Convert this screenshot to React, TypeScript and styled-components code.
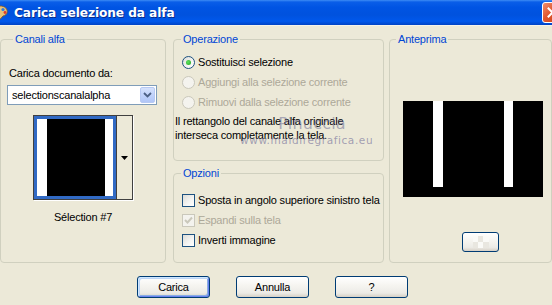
import React from 'react';
import styled, { createGlobalStyle } from 'styled-components';

const Global = createGlobalStyle`
  html, body { margin: 0; padding: 0; background: #ECE9D8; }
  body { font-family: "Liberation Sans", Arial, sans-serif; font-size: 11px; }
`;

const Window = styled.div`
  position: relative;
  width: 552px;
  height: 305px;
  overflow: hidden;
  background: #ECE9D8;
  display: flex;
  flex-direction: column;
  font-family: "Liberation Sans", Arial, sans-serif;
  font-size: 11px;
  letter-spacing: -0.2px;
  color: #000;
`;

const TitleBar = styled.div`
  flex: none;
  height: 25px;
  display: flex;
  align-items: center;
  background: linear-gradient(to bottom, #3D8CF5 0%, #0A5EE8 8%, #0054E3 30%, #0052DE 60%, #0058EC 85%, #0043C4 100%);
  border-bottom: 1px solid #F5F3EA;
`;

const TitleIcon = styled.svg`
  flex: none;
  width: 16px;
  height: 16px;
  margin-left: -8px;
`;

const TitleText = styled.div`
  margin-left: 6px;
  color: #fff;
  font-family: "DejaVu Sans", Verdana, sans-serif;
  font-weight: bold;
  font-size: 12.2px;
  letter-spacing: -0.1px;
  text-shadow: 1px 1px 0 #0A2C8C;
`;

const CloseButton = styled.div`
  flex: none;
  margin-left: auto;
  margin-right: -11px;
  width: 21px;
  height: 21px;
  box-sizing: border-box;
  border: 1px solid #fff;
  border-radius: 3px;
  background: linear-gradient(to bottom right, #F08E6E 0%, #E0562E 45%, #C8401A 100%);
  display: flex;
  align-items: center;
  padding-left: 4px;
`;

const Body = styled.div`
  flex: none;
  display: flex;
  padding-top: 7px;
  height: 230px;
`;

const Group = styled.fieldset<{ $w?: number }>`
  margin: 0;
  padding: 0;
  min-width: 0;
  box-sizing: border-box;
  border: 1px solid #D0D0BF;
  border-radius: 4px;
  display: flex;
  flex-direction: column;
  ${p => (p.$w ? `width: ${p.$w}px; flex: none;` : 'flex: 1;')}
`;

const Legend = styled.legend<{ $off: number }>`
  margin-left: ${p => p.$off}px;
  padding: 0 2px;
  color: #0046D5;
  font-size: 11px;
  line-height: 13px;
`;

const LeftGroup = styled(Group)`
  margin-right: 7px;
  padding-left: 6px;
`;

const FieldLabel = styled.div`
  margin-top: 21px;
  margin-left: 2px;
  line-height: 13px;
`;

const Select = styled.div`
  margin-top: 5px;
  width: 150px;
  height: 20px;
  box-sizing: border-box;
  border: 1px solid #7F9DB9;
  background: #fff;
  display: flex;
  align-items: center;
  padding-left: 4px;
`;

const SelectText = styled.span`
  flex: 1;
`;

const SelectArrow = styled.div`
  flex: none;
  width: 15px;
  height: 16px;
  margin-right: 1px;
  box-sizing: border-box;
  border: 1px solid #B7C9F3;
  border-radius: 2px;
  background: linear-gradient(to bottom, #D6E2FC 0%, #C1D3FB 50%, #B1C6F7 100%);
  display: flex;
  align-items: center;
  justify-content: center;
`;

const Thumb = styled.div`
  margin-top: 10px;
  align-self: center;
  margin-left: -6px;
  width: 100px;
  height: 85px;
  box-sizing: border-box;
  border: 1px solid #404040;
  box-shadow: 1px 1px 0 #fff;
  display: flex;
`;

const ThumbImage = styled.div`
  flex: none;
  width: 82px;
  box-sizing: border-box;
  border: 3px solid #316AC5;
  display: flex;
`;

const ThumbDrop = styled.div`
  flex: 1;
  border-left: 1px solid #404040;
  background: #ECE9D8;
  display: flex;
  align-items: center;
  justify-content: center;
`;

const Caption = styled.div`
  margin-top: 11px;
  margin-left: -6px;
  text-align: center;
  line-height: 13px;
`;

const MiddleCol = styled.div`
  flex: none;
  width: 211px;
  margin-right: 5px;
  display: flex;
  flex-direction: column;
  gap: 6px;
`;

const OpGroup = styled(Group)`
  height: 128px;
  flex: none;
`;

const OptGroup = styled(Group)`
  flex: 1;
`;

const OptionRow = styled.div<{ $first?: number }>`
  height: 20px;
  display: flex;
  align-items: center;
  gap: 3px;
  padding-left: 8px;
  margin-top: ${p => p.$first ?? 0}px;
`;

const OptionText = styled.span<{ $disabled?: boolean }>`
  color: ${p => (p.$disabled ? '#ACA899' : '#000')};
  white-space: nowrap;
`;

const Radio = styled.span<{ $disabled?: boolean; $checked?: boolean }>`
  flex: none;
  width: 13px;
  height: 13px;
  box-sizing: border-box;
  border-radius: 50%;
  border: 1px solid ${p => (p.$disabled ? '#CAC8BB' : '#1C5180')};
  background: ${p =>
    p.$disabled ? '#F4F3EE' : 'linear-gradient(135deg, #DCDCD7 0%, #F5F5F3 60%, #FFFFFF 100%)'};
  display: flex;
  align-items: center;
  justify-content: center;
  &::after {
    content: '';
    display: ${p => (p.$checked ? 'block' : 'none')};
    width: 5px;
    height: 5px;
    border-radius: 50%;
    background: radial-gradient(circle at 40% 40%, #5CE25C 0%, #21A121 100%);
  }
`;

const Check = styled.span<{ $disabled?: boolean }>`
  flex: none;
  width: 13px;
  height: 13px;
  box-sizing: border-box;
  border: 1px solid ${p => (p.$disabled ? '#CAC8BB' : '#1C5180')};
  background: ${p =>
    p.$disabled ? '#F4F3EE' : 'linear-gradient(135deg, #DCDCD7 0%, #F5F5F3 60%, #FFFFFF 100%)'};
  display: flex;
  align-items: center;
  justify-content: center;
`;

const InfoText = styled.div`
  margin-top: 2px;
  padding-left: 1px;
  line-height: 14px;
`;

const RightGroup = styled(Group)`
  flex: none;
  width: 163px;
`;

const Preview = styled.svg`
  flex: none;
  margin-top: 55px;
  margin-left: 13px;
  width: 140px;
  height: 96px;
`;

const SmallButton = styled.div`
  margin-top: 35px;
  margin-left: 72px;
  width: 37px;
  height: 20px;
  box-sizing: border-box;
  border: 1px solid #003C74;
  border-radius: 3px;
  background: linear-gradient(to bottom, #FFFFFF 0%, #F4F3EE 50%, #ECEBE6 80%, #D6D0C5 100%);
  display: flex;
  align-items: center;
  justify-content: center;
`;

const ButtonRow = styled.div`
  flex: none;
  display: flex;
  gap: 26px;
  padding-left: 137px;
  margin-top: 13px;
`;

const Button = styled.button<{ $default?: boolean }>`
  width: 73px;
  height: 22px;
  box-sizing: border-box;
  padding: 0;
  border: 1px solid #003C74;
  border-radius: 3px;
  background: linear-gradient(to bottom, #FFFFFF 0%, #F6F5F1 40%, #ECEBE6 80%, #D6D0C5 100%);
  font-family: "Liberation Sans", Arial, sans-serif;
  font-size: 11px;
  letter-spacing: -0.2px;
  color: #000;
  box-shadow: ${p =>
    p.$default
      ? 'inset 1px 1px 0 #CEE7FF, inset -1px -1px 0 #6982EE, inset 2px 2px 0 #BCD4F6, inset -2px -2px 0 #89ADE4'
      : 'none'};
`;

const Watermark = styled.div`
  position: absolute;
  left: 240px;
  top: 114px;
  display: flex;
  flex-direction: column;
  align-items: center;
  pointer-events: none;
`;

const WmName = styled.span`
  margin-left: 11px;
  font-family: "DejaVu Sans", sans-serif;
  font-size: 16px;
  letter-spacing: 0.2px;
  color: rgba(110, 110, 150, 0.55);
  line-height: 20px;
`;

const WmUrl = styled.span`
  font-family: "DejaVu Sans", sans-serif;
  font-size: 10.5px;
  letter-spacing: 0.6px;
  color: rgba(110, 105, 150, 0.6);
  line-height: 13px;
`;

export default function App() {
  return (
    <Window>
      <Global />
      <TitleBar>
        <TitleIcon viewBox="0 0 16 16">
          <path d="M8 1 C13 1 16 4 15 8 C14 11 11 10 10 12 C9 14 7 15 5 14 C1 12 1 7 3 4 C4 2 6 1 8 1 Z" fill="#E8C27A" stroke="#8A5A20" strokeWidth="0.8" />
          <circle cx="11" cy="4.5" r="1.6" fill="#2E7BE0" />
          <circle cx="13" cy="7.5" r="1.4" fill="#E03A2E" />
          <circle cx="6" cy="4.5" r="1.5" fill="#3DB24A" />
          <circle cx="5" cy="9" r="1.4" fill="#F2E23A" />
        </TitleIcon>
        <TitleText>Carica selezione da alfa</TitleText>
        <CloseButton>
          <svg width="11" height="11" viewBox="0 0 11 11">
            <path d="M1.5 1.5 L9.5 9.5 M9.5 1.5 L1.5 9.5" stroke="#fff" strokeWidth="2" strokeLinecap="square" />
          </svg>
        </CloseButton>
      </TitleBar>

      <Body>
        <LeftGroup $w={166}>
          <Legend $off={6}>Canali alfa</Legend>
          <FieldLabel>Carica documento da:</FieldLabel>
          <Select>
            <SelectText>selectionscanalalpha</SelectText>
            <SelectArrow>
              <svg width="9" height="6" viewBox="0 0 9 6">
                <path d="M1 1 L4.5 4.5 L8 1" stroke="#4D6185" strokeWidth="1.8" fill="none" />
              </svg>
            </SelectArrow>
          </Select>
          <Thumb>
            <ThumbImage>
              <svg width="76" height="77" viewBox="0 0 76 77" preserveAspectRatio="none">
                <rect x="0" y="0" width="76" height="77" fill="#fff" />
                <rect x="10" y="0" width="58" height="77" fill="#000" />
              </svg>
            </ThumbImage>
            <ThumbDrop>
              <svg width="7" height="4" viewBox="0 0 7 4">
                <path d="M0 0 L7 0 L3.5 4 Z" fill="#000" />
              </svg>
            </ThumbDrop>
          </Thumb>
          <Caption>Sélection #7</Caption>
        </LeftGroup>

        <MiddleCol>
          <OpGroup>
            <Legend $off={7}>Operazione</Legend>
            <OptionRow $first={6}>
              <Radio $checked />
              <OptionText>Sostituisci selezione</OptionText>
            </OptionRow>
            <OptionRow>
              <Radio $disabled />
              <OptionText $disabled>Aggiungi alla selezione corrente</OptionText>
            </OptionRow>
            <OptionRow>
              <Radio $disabled />
              <OptionText $disabled>Rimuovi dalla selezione corrente</OptionText>
            </OptionRow>
            <InfoText>
              Il rettangolo del canale alfa originale
              <br />
              interseca completamente la tela.
            </InfoText>
          </OpGroup>
          <OptGroup>
            <Legend $off={7}>Opzioni</Legend>
            <OptionRow $first={10}>
              <Check />
              <OptionText>Sposta in angolo superiore sinistro tela</OptionText>
            </OptionRow>
            <OptionRow>
              <Check $disabled>
                <svg width="9" height="9" viewBox="0 0 9 9">
                  <path d="M1 4 L3.5 6.5 L8 1.5" stroke="#CAC8BB" strokeWidth="2" fill="none" />
                </svg>
              </Check>
              <OptionText $disabled>Espandi sulla tela</OptionText>
            </OptionRow>
            <OptionRow>
              <Check />
              <OptionText>Inverti immagine</OptionText>
            </OptionRow>
          </OptGroup>
        </MiddleCol>

        <RightGroup>
          <Legend $off={6}>Anteprima</Legend>
          <Preview viewBox="0 0 140 96">
            <rect x="0" y="0" width="140" height="96" fill="#000" />
            <rect x="30" y="0" width="10" height="86" fill="#fff" />
            <rect x="101" y="0" width="9" height="86" fill="#fff" />
          </Preview>
          <SmallButton>
            <svg width="16" height="12" viewBox="0 0 16 12">
              <rect x="0" y="0" width="16" height="12" fill="#E9E7E0" />
              <rect x="0" y="0" width="5" height="6" fill="#FAFAF7" />
              <rect x="10" y="0" width="6" height="6" fill="#FAFAF7" />
              <rect x="5" y="6" width="5" height="6" fill="#FAFAF7" />
            </svg>
          </SmallButton>
        </RightGroup>
      </Body>

      <ButtonRow>
        <Button $default>Carica</Button>
        <Button>Annulla</Button>
        <Button>?</Button>
      </ButtonRow>

      <Watermark>
        <WmName>Pinuccia</WmName>
        <WmUrl>www.maidiregrafica.eu</WmUrl>
      </Watermark>
    </Window>
  );
}
